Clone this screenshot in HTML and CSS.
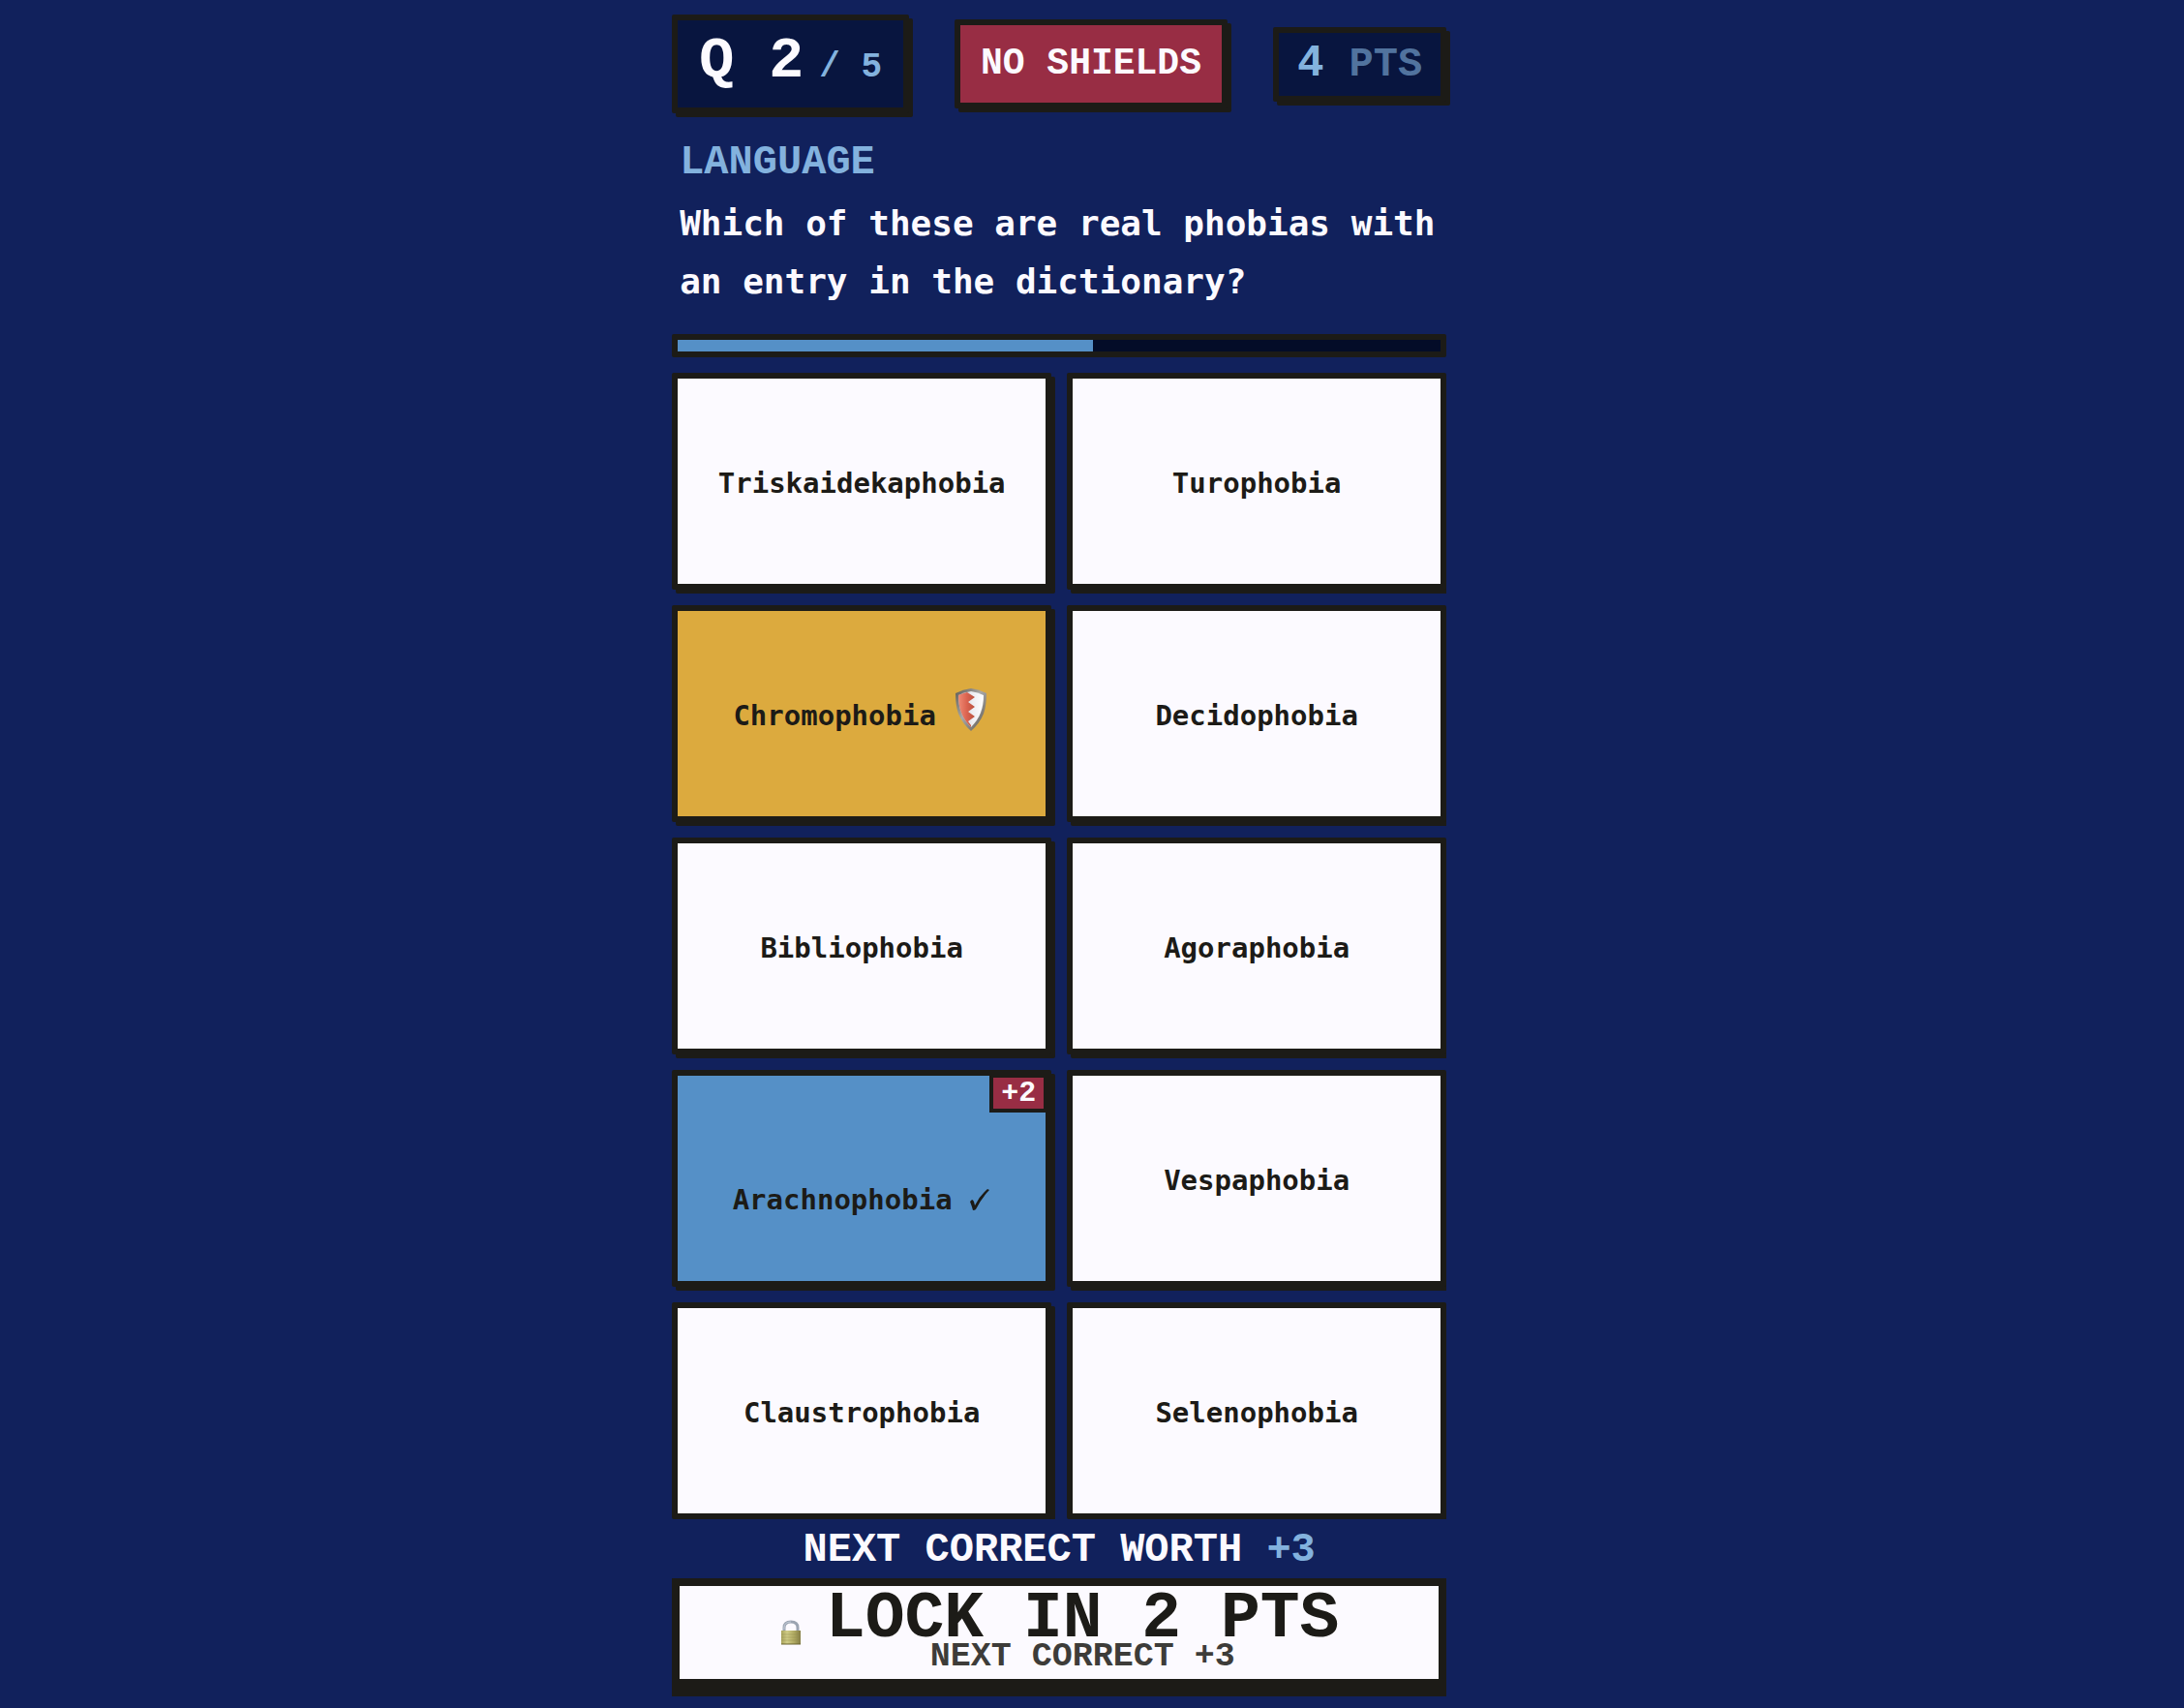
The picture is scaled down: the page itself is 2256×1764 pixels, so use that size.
FILE: index.html
```html
<!DOCTYPE html>
<html lang="en">
<head>
<meta charset="utf-8">
<meta name="viewport" content="width=device-width, initial-scale=1">
<title>Phobia quiz</title>
<link rel="stylesheet" href="styles.css">
</head>
<body>
<main class="game">
  <header class="status">
    <div class="chip round"><span class="round-now">Q 2</span><span class="round-total">/ 5</span></div>
    <div class="chip shields">NO SHIELDS</div>
    <div class="chip score"><span class="score-value">4</span><span class="score-unit">PTS</span></div>
  </header>

  <p class="category">LANGUAGE</p>
  <h1 class="question">Which of these are real phobias with an entry in the dictionary?</h1>

  <div class="timer" role="progressbar" aria-label="Time left" aria-valuenow="54" aria-valuemin="0" aria-valuemax="100">
    <div class="timer-fill" style="width: 54.4%"></div>
  </div>

  <div class="answers">
    <button class="answer" type="button">Triskaidekaphobia</button>
    <button class="answer" type="button">Turophobia</button>
    <button class="answer shielded" type="button">Chromophobia
      <svg class="shield-icon" viewBox="0 0 40 44" aria-hidden="true">
        <defs>
          <linearGradient id="steel" x1="0" x2="1" y1="0" y2="1"><stop offset="0" stop-color="#5d5a55"/><stop offset=".45" stop-color="#a9a8a6"/><stop offset="1" stop-color="#55514b"/></linearGradient>
          <linearGradient id="red" x1="0" x2="1"><stop offset="0" stop-color="#ee8a74"/><stop offset=".5" stop-color="#dc6450"/><stop offset="1" stop-color="#b9503e"/></linearGradient>
          <linearGradient id="silver" x1="0" x2="1"><stop offset="0" stop-color="#bfc0c8"/><stop offset=".55" stop-color="#ededf2"/><stop offset="1" stop-color="#fff"/></linearGradient>
        </defs>
        <path d="M4 5Q12 1 20 0Q28 1 36 5Q36 17 33 26Q29 36 20 44Q11 36 7 26Q4 17 4 5Z" fill="url(#steel)"/>
        <path d="M7 7Q13 4 20 3Q27 4 33 7Q33 17 30 25Q27 33 20 40Q13 33 10 25Q7 17 7 7Z" fill="url(#silver)"/>
        <path d="M7 7Q12 5 16 4L24 9L17 14L24 19L17 24L24 29L17 34L20 38V40Q13 33 10 25Q7 17 7 7Z" fill="url(#red)"/>
      </svg>
    </button>
    <button class="answer" type="button">Decidophobia</button>
    <button class="answer" type="button">Bibliophobia</button>
    <button class="answer" type="button">Agoraphobia</button>
    <button class="answer picked" type="button" aria-pressed="true">Arachnophobia
      <svg class="check-icon" viewBox="0 0 24 24" aria-hidden="true"><path d="M2 14L4 12Q5 12 6 14L7 18Q12 8 20 1L22 2Q14 10 8 22Q7 23 5 23Q4 19 2 14Z"/></svg>
      <span class="bonus">+2</span>
    </button>
    <button class="answer" type="button">Vespaphobia</button>
    <button class="answer" type="button">Claustrophobia</button>
    <button class="answer" type="button">Selenophobia</button>
  </div>

  <p class="worth">NEXT CORRECT WORTH <span class="worth-value">+3</span></p>

  <button class="lock-in" type="button">
    <svg class="lock-icon" viewBox="0 0 24 26" aria-hidden="true">
      <defs>
        <linearGradient id="brass" x1="0" x2="1"><stop offset="0" stop-color="#aaa45c"/><stop offset=".3" stop-color="#cfcb86"/><stop offset=".65" stop-color="#b1ab63"/><stop offset="1" stop-color="#847d45"/></linearGradient>
      </defs>
      <path d="M5 12V8Q5 2 12 2Q19 2 19 8V12" fill="none" stroke="#9ba4b1" stroke-width="3"/>
      <path d="M5 10V8Q5 2 12 2" fill="none" stroke="#c3ccd9" stroke-width="1"/>
      <rect x="2" y="11" width="20" height="14" fill="url(#brass)"/>
      <path d="M2 15H22M2 18H22M2 21H22" stroke="#8f894c" stroke-width="1" opacity=".4"/>
      <path d="M2 25H22" stroke="#69632f" stroke-width="1"/>
    </svg>
    <span class="lock-text">
      <span class="lock-title">LOCK IN 2 PTS</span>
      <span class="lock-note">NEXT CORRECT +3</span>
    </span>
  </button>
</main>
</body>
</html>
```
FILE: styles.css
```css
:root {
  --navy: #11215c;
  --panel: #08153f;
  --ink: #1c1b17;
  --paper: #fcfaff;
  --sky: #83b2de;
  --blue: #5590c7;
  --crimson: #982d44;
  --gold: #dcaa3e;
  --display: "Liberation Mono", "Courier New", monospace;
  --text: "DejaVu Sans Mono", monospace;
}

* {
  box-sizing: border-box;
}

body {
  margin: 0;
  padding-right: 3vw;
  background: var(--navy);
  color: var(--paper);
  font-family: var(--display);
  font-weight: 700;
}

.game {
  display: flex;
  flex-direction: column;
  max-width: 800px;
  min-height: 100vh;
  margin: 0 auto;
  padding: 15px 0 22px;
}

.status {
  display: flex;
  justify-content: space-between;
  align-items: center;
}

.chip {
  display: flex;
  align-items: baseline;
  border: 6px solid var(--ink);
  border-radius: 2px;
  background: var(--panel);
  box-shadow: 4px 4px 0 var(--ink);
  white-space: nowrap;
}

.round {
  gap: 16px;
  padding: 10px 22px 9px;
  line-height: 64px;
}

.round-now {
  font-size: 60px;
}

.round-total {
  color: var(--sky);
  font-size: 36px;
}

.shields {
  padding: 16px 21px;
  background: var(--crimson);
  font-size: 38px;
  line-height: 48px;
}

.score {
  gap: 26px;
  padding: 8px 19px;
  color: var(--sky);
  line-height: 48px;
}

.score-value {
  font-size: 46px;
}

.score-unit {
  font-size: 42px;
  opacity: 0.6;
}

.category {
  margin: 27px 8px 0;
  color: var(--sky);
  font-size: 42px;
  line-height: 48px;
}

.question {
  margin: 9px 8px 24px;
  font-family: var(--text);
  font-size: 36px;
  line-height: 60px;
}

.timer {
  height: 24px;
  border: 6px solid var(--ink);
  border-radius: 2px;
  background: #030c28;
}

.timer-fill {
  height: 100%;
  background: var(--blue);
}

.answers {
  display: grid;
  flex: 1;
  grid-template-columns: 1fr 1fr;
  grid-auto-rows: 1fr;
  gap: 16px;
  margin-top: 16px;
  overflow: hidden;
}

.answer {
  position: relative;
  display: flex;
  justify-content: center;
  align-items: center;
  gap: 16px;
  min-height: 120px;
  padding: 4px 0 0;
  border: 6px solid var(--ink);
  border-radius: 2px;
  background: var(--paper);
  box-shadow: 4px 4px 0 var(--ink);
  color: var(--ink);
  font-family: var(--text);
  font-size: 29px;
  font-weight: 700;
  line-height: 40px;
}

.shielded {
  background: var(--gold);
}

.picked {
  padding-top: 44px;
  background: var(--blue);
}

.shield-icon {
  width: 40px;
  height: 44px;
  margin-bottom: 12px;
}

.check-icon {
  width: 24px;
  height: 24px;
  fill: var(--ink);
}

.bonus {
  position: absolute;
  top: -2px;
  right: -2px;
  padding: 0 8px;
  border: 4px solid var(--ink);
  background: var(--crimson);
  color: var(--paper);
  font-family: var(--display);
  font-size: 30px;
  line-height: 32px;
}

.worth {
  margin: 8px 0 5px;
  font-size: 42px;
  line-height: 48px;
  text-align: center;
}

.worth-value {
  color: var(--sky);
}

.lock-in {
  display: flex;
  justify-content: center;
  align-items: center;
  gap: 24px;
  padding: 9px 0;
  border: 8px solid var(--ink);
  border-radius: 0;
  background: var(--paper);
  box-shadow: 0 10px 0 var(--ink);
  color: var(--ink);
  font-family: var(--display);
  font-weight: 700;
}

.lock-icon {
  width: 24px;
  height: 26px;
}

.lock-text {
  display: flex;
  flex-direction: column;
}

.lock-title {
  font-size: 68px;
  line-height: 50px;
}

.lock-note {
  font-size: 35px;
  line-height: 28px;
  opacity: 0.85;
}
```
